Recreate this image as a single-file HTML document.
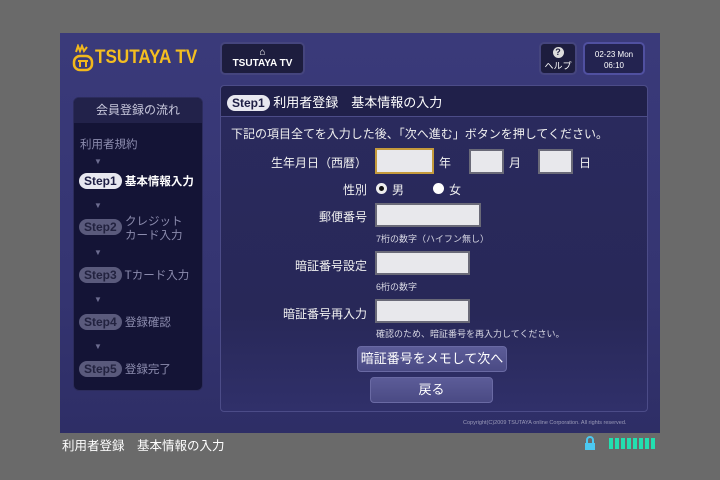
<!DOCTYPE html><html><head><meta charset="utf-8"><style>
*{margin:0;padding:0;box-sizing:border-box}
body{width:720px;height:480px;background:#6a6a6a;position:relative;overflow:hidden;font-family:"Liberation Sans","Noto Sans CJK JP",sans-serif;color:#e6e6f0}
.a{position:absolute}
#blue{left:60px;top:33px;width:600px;height:400px;background:linear-gradient(#3a3a7a,#353572 60%,#2e2e66)}
.btn{background:#1d1d3e;border:2px solid #45457e;border-radius:5px;color:#fff;text-align:center;font-weight:bold}
.lbl{font-size:12px;text-align:right;width:120px;color:#f0f0f0}
.inp{background:#e8e8ec;border:2px solid #6a6a78}
.pill{display:inline-block;background:#e8e8f0;color:#1e1e44;border-radius:9px;font-size:12px;padding:1px 5px;font-weight:bold}
.pd{background:#5a5a7c;color:#22223f}
.st{font-size:11.5px;color:#8c8cae}
.ar{font-size:8px;color:#6c6c90}
.small{font-size:9px;color:#d8d8e4}
.big{background:linear-gradient(#5c5c98,#4a4a84);border:1px solid #6a6aa4;border-radius:4px;color:#fff;text-align:center;font-size:13px}
</style></head><body>
<div id="blue" class="a"></div>
<div class="a" style="left:72px;top:44px;width:20px;height:28px;">
<svg width="22" height="30" viewBox="0 0 22 30"><path d="M4 8 L6 2 L8 7 L10 2 L12 7 L15 3" stroke="#f2b81c" stroke-width="2" fill="none"/><rect x="2" y="12" width="18" height="14" rx="6" fill="none" stroke="#f2b81c" stroke-width="2.5"/><path d="M6 17h10M8 17v6M14 17v6" stroke="#f2b81c" stroke-width="2"/></svg></div>
<div class="a" style="left:95px;top:47px;font-size:19px;font-weight:bold;color:#f4be20;transform:scaleX(0.9);transform-origin:left">TSUTAYA TV</div>
<div class="a btn" style="left:220px;top:42px;width:85px;height:33px;font-size:10px;padding-top:3px"><div style="font-size:10px;line-height:11px">⌂</div>TSUTAYA TV</div>
<div class="a btn" style="left:539px;top:42px;width:38px;height:33px;font-size:9px;font-weight:normal;padding-top:3px"><div style="margin:0 auto 1px;width:11px;height:11px;border-radius:50%;background:#ddd;color:#1d1d3e;font-size:9px;font-weight:bold;line-height:11px">?</div>ヘルプ</div>
<div class="a btn" style="left:583px;top:42px;width:62px;height:33px;font-size:8px;line-height:11px;padding-top:5px;background:#232350;border-color:#5050a0;font-weight:normal">02-23 Mon<br>06:10</div>
<div class="a" style="left:73px;top:97px;width:130px;height:294px;background:#141436;border:1px solid #2c2c5c;border-radius:6px"></div>
<div class="a" style="left:74px;top:98px;width:128px;height:25px;background:#22224a;border-radius:5px 5px 0 0;text-align:center;font-size:12px;color:#c8c8dc;line-height:25px">会員登録の流れ</div>
<div class="a st" style="left:80px;top:136px">利用者規約</div>
<div class="a ar" style="left:94px;top:157px">▼</div>
<div class="a" style="left:79px;top:173px;font-size:11.5px;font-weight:bold;color:#fff"><span class="pill">Step1</span> 基本情報入力</div>
<div class="a ar" style="left:94px;top:201px">▼</div>
<div class="a st" style="left:79px;top:215px;line-height:14px"><span class="pill pd" style="vertical-align:-6px">Step2</span></div>
<div class="a st" style="left:125px;top:215px;line-height:14px">クレジット<br>カード入力</div>
<div class="a ar" style="left:94px;top:248px">▼</div>
<div class="a st" style="left:79px;top:267px"><span class="pill pd">Step3</span> Tカード入力</div>
<div class="a ar" style="left:94px;top:295px">▼</div>
<div class="a st" style="left:79px;top:314px"><span class="pill pd">Step4</span> 登録確認</div>
<div class="a ar" style="left:94px;top:342px">▼</div>
<div class="a st" style="left:79px;top:361px"><span class="pill pd">Step5</span> 登録完了</div>
<div class="a" style="left:220px;top:85px;width:428px;height:327px;background:linear-gradient(#2a2a5e,#282858 70%,#30306a);border:1px solid #4c4c88;border-radius:4px"></div>
<div class="a" style="left:221px;top:86px;width:426px;height:31px;background:#20204a;border-bottom:1px solid #4c4c88;border-radius:4px 4px 0 0"></div>
<div class="a" style="left:227px;top:92px;font-size:13px;color:#fff"><span class="pill" style="font-size:12px">Step1</span> 利用者登録　基本情報の入力</div>
<div class="a" style="left:231px;top:125px;font-size:12px;color:#f0f0f0">下記の項目全てを入力した後、「次へ進む」ボタンを押してください。</div>
<div class="a lbl" style="left:247px;top:154px">生年月日（西暦）</div>
<div class="a inp" style="left:375px;top:148px;width:59px;height:26px;border-color:#c49a3c"></div>
<div class="a lbl" style="left:439px;top:154px;text-align:left">年</div>
<div class="a inp" style="left:469px;top:149px;width:35px;height:25px"></div>
<div class="a lbl" style="left:509px;top:154px;text-align:left">月</div>
<div class="a inp" style="left:538px;top:149px;width:35px;height:25px"></div>
<div class="a lbl" style="left:579px;top:154px;text-align:left">日</div>
<div class="a lbl" style="left:247px;top:181px">性別</div>
<div class="a" style="left:376px;top:183px;width:11px;height:11px;border-radius:50%;background:#eee;border:3px solid #eee"><div style="width:5px;height:5px;background:#111;border-radius:50%"></div></div>
<div class="a lbl" style="left:392px;top:181px;text-align:left">男</div>
<div class="a" style="left:433px;top:183px;width:11px;height:11px;border-radius:50%;background:#fff"></div>
<div class="a lbl" style="left:449px;top:181px;text-align:left">女</div>
<div class="a lbl" style="left:247px;top:208px">郵便番号</div>
<div class="a inp" style="left:375px;top:203px;width:106px;height:24px"></div>
<div class="a small" style="left:376px;top:232px">7桁の数字（ハイフン無し）</div>
<div class="a lbl" style="left:247px;top:257px">暗証番号設定</div>
<div class="a inp" style="left:375px;top:251px;width:95px;height:24px"></div>
<div class="a small" style="left:376px;top:280px">6桁の数字</div>
<div class="a lbl" style="left:247px;top:305px">暗証番号再入力</div>
<div class="a inp" style="left:375px;top:299px;width:95px;height:24px"></div>
<div class="a small" style="left:376px;top:327px">確認のため、暗証番号を再入力してください。</div>
<div class="a big" style="left:357px;top:346px;width:150px;height:26px;line-height:24px">暗証番号をメモして次へ</div>
<div class="a big" style="left:370px;top:377px;width:123px;height:26px;line-height:24px">戻る</div>
<div class="a" style="left:463px;top:420px;font-size:5.5px;color:#9a9ab8;white-space:nowrap">Copyright(C)2009 TSUTAYA online Corporation. All rights reserved.</div>
<div class="a" style="left:62px;top:435px;font-size:12.5px;color:#fff">利用者登録　基本情報の入力</div>
<div class="a" style="left:584px;top:436px;width:12px;height:14px"><svg width="12" height="14"><path d="M3 7V4a3 3 0 0 1 6 0v3" stroke="#4cc8f0" stroke-width="2" fill="none"/><rect x="1" y="7" width="10" height="7" fill="#4cc8f0"/></svg></div>
<div class="a" style="left:609px;top:438px;width:47px;height:11px;background:repeating-linear-gradient(90deg,#22e0b0 0 4px,transparent 4px 6px)"></div>
</body></html>
